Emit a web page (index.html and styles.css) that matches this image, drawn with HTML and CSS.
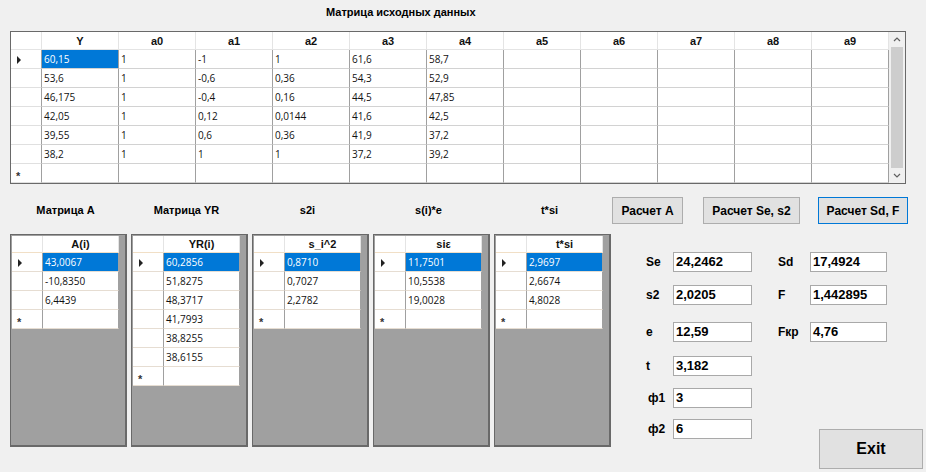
FILE: index.html
```html
<!DOCTYPE html>
<html lang="ru">
<head>
  <meta charset="UTF-8" />
  <title>Матрица исходных данных</title>
  <link rel="stylesheet" href="styles.css">
</head>
<body>

  <div class="title">Матрица исходных данных</div>

  <div class="datagrid">
    <table class="dg main">
      <colgroup>
        <col class="rhc"><col><col><col><col><col><col><col><col><col><col><col>
      </colgroup>
      <tr><th></th><th>Y</th><th>a0</th><th>a1</th><th>a2</th><th>a3</th><th>a4</th><th>a5</th><th>a6</th><th>a7</th><th>a8</th><th>a9</th></tr>
      <tr><td class="rh"><span class="cur"></span></td><td class="sel">60,15</td><td>1</td><td>-1</td><td>1</td><td>61,6</td><td>58,7</td><td></td><td></td><td></td><td></td><td></td></tr>
      <tr><td class="rh"></td><td>53,6</td><td>1</td><td>-0,6</td><td>0,36</td><td>54,3</td><td>52,9</td><td></td><td></td><td></td><td></td><td></td></tr>
      <tr><td class="rh"></td><td>46,175</td><td>1</td><td>-0,4</td><td>0,16</td><td>44,5</td><td>47,85</td><td></td><td></td><td></td><td></td><td></td></tr>
      <tr><td class="rh"></td><td>42,05</td><td>1</td><td>0,12</td><td>0,0144</td><td>41,6</td><td>42,5</td><td></td><td></td><td></td><td></td><td></td></tr>
      <tr><td class="rh"></td><td>39,55</td><td>1</td><td>0,6</td><td>0,36</td><td>41,9</td><td>37,2</td><td></td><td></td><td></td><td></td><td></td></tr>
      <tr><td class="rh"></td><td>38,2</td><td>1</td><td>1</td><td>1</td><td>37,2</td><td>39,2</td><td></td><td></td><td></td><td></td><td></td></tr>
      <tr><td class="rh new">*</td><td></td><td></td><td></td><td></td><td></td><td></td><td></td><td></td><td></td><td></td><td></td></tr>
    </table>
    <div class="vscroll">
      <svg class="arr" width="16" height="15" viewBox="0 0 16 15"><path d="M5 9 L8 6 L11 9" fill="none" stroke="#606060" stroke-width="1.2"/></svg>
      <div class="thumb"></div>
      <svg class="arr" width="16" height="15" viewBox="0 0 16 15"><path d="M5 6 L8 9 L11 6" fill="none" stroke="#606060" stroke-width="1.2"/></svg>
    </div>
  </div>

  <div class="lower">
    <div class="sets">
      <div class="set">
        <div class="cap">Матрица A</div>
        <div class="box">
          <table class="dg small">
            <colgroup><col class="rhc"><col class="vc"></colgroup>
            <tr><th></th><th>A(i)</th></tr>
            <tr><td class="rh"><span class="cur"></span></td><td class="sel">43,0067</td></tr>
            <tr><td class="rh"></td><td>-10,8350</td></tr>
            <tr><td class="rh"></td><td>6,4439</td></tr>
            <tr><td class="rh new">*</td><td></td></tr>
          </table>
        </div>
      </div>
      <div class="set">
        <div class="cap">Матрица YR</div>
        <div class="box">
          <table class="dg small">
            <colgroup><col class="rhc"><col class="vc"></colgroup>
            <tr><th></th><th>YR(i)</th></tr>
            <tr><td class="rh"><span class="cur"></span></td><td class="sel">60,2856</td></tr>
            <tr><td class="rh"></td><td>51,8275</td></tr>
            <tr><td class="rh"></td><td>48,3717</td></tr>
            <tr><td class="rh"></td><td>41,7993</td></tr>
            <tr><td class="rh"></td><td>38,8255</td></tr>
            <tr><td class="rh"></td><td>38,6155</td></tr>
            <tr><td class="rh new">*</td><td></td></tr>
          </table>
        </div>
      </div>
      <div class="set">
        <div class="cap">s2i</div>
        <div class="box">
          <table class="dg small">
            <colgroup><col class="rhc"><col class="vc"></colgroup>
            <tr><th></th><th>s_i^2</th></tr>
            <tr><td class="rh"><span class="cur"></span></td><td class="sel">0,8710</td></tr>
            <tr><td class="rh"></td><td>0,7027</td></tr>
            <tr><td class="rh"></td><td>2,2782</td></tr>
            <tr><td class="rh new">*</td><td></td></tr>
          </table>
        </div>
      </div>
      <div class="set">
        <div class="cap">s(i)*e</div>
        <div class="box">
          <table class="dg small">
            <colgroup><col class="rhc"><col class="vc"></colgroup>
            <tr><th></th><th>siε</th></tr>
            <tr><td class="rh"><span class="cur"></span></td><td class="sel">11,7501</td></tr>
            <tr><td class="rh"></td><td>10,5538</td></tr>
            <tr><td class="rh"></td><td>19,0028</td></tr>
            <tr><td class="rh new">*</td><td></td></tr>
          </table>
        </div>
      </div>
      <div class="set">
        <div class="cap">t*si</div>
        <div class="box">
          <table class="dg small">
            <colgroup><col class="rhc"><col class="vc"></colgroup>
            <tr><th></th><th>t*si</th></tr>
            <tr><td class="rh"><span class="cur"></span></td><td class="sel">2,9697</td></tr>
            <tr><td class="rh"></td><td>2,6674</td></tr>
            <tr><td class="rh"></td><td>4,8028</td></tr>
            <tr><td class="rh new">*</td><td></td></tr>
          </table>
        </div>
      </div>
    </div>

    <div class="side">
      <div class="btns">
        <button class="btn b1">Расчет A</button>
        <button class="btn b2">Расчет Se, s2</button>
        <button class="btn b3">Расчет Sd, F</button>
      </div>

      <div class="fields">
        <div class="fl c1">Se</div><div class="tb c2">24,2462</div>
        <div class="fl c3">Sd</div><div class="tb c4">17,4924</div>

        <div class="fl c1">s2</div><div class="tb c2">2,0205</div>
        <div class="fl c3">F</div><div class="tb c4">1,442895</div>

        <div class="fl c1">e</div><div class="tb c2">12,59</div>
        <div class="fl c3">Fкр</div><div class="tb c4">4,76</div>

        <div class="fl c1">t</div><div class="tb c2">3,182</div>

        <div class="fl c1 phi">ф1</div><div class="tb c2">3</div>

        <div class="fl c1 phi">ф2</div><div class="tb c2">6</div>
        <button class="btn exit">Exit</button>
      </div>
    </div>
  </div>

</body>
</html>
```

FILE: styles.css
```css
body {
  margin: 0;
  width: 926px;
  height: 472px;
  overflow: hidden;
  background: #f0f0f0;
  font-family: "Liberation Sans", Arial, sans-serif;
  color: #000;
}

.title {
  height: 31px;
  box-sizing: border-box;
  padding: 4px 0 0 326px;
  font-size: 11px;
  font-weight: bold;
  line-height: 16px;
}

/* Data grids */
.datagrid {
  display: flex;
  margin-left: 10px;
  width: 896px;
  height: 153px;
  box-sizing: border-box;
  border: 1px solid #696969;
  background: #fff;
}

.dg {
  border-collapse: separate;
  border-spacing: 0;
  table-layout: fixed;
  background: #fff;
  font-family: "Open Sans", sans-serif;
  font-size: 10px;
}

.dg.main {
  width: 878px;
}

.dg.main col {
  width: 77px;
}

.dg col.rhc {
  width: 31px;
}

.dg th,
.dg td {
  box-sizing: border-box;
  height: 19px;
  padding: 0 2px;
  border-right: 1px solid #a0a0a0;
  border-bottom: 1px solid #d2d2d2;
  white-space: nowrap;
  overflow: hidden;
  text-align: left;
  color: #111;
}

.dg th {
  height: 18px;
  font-family: "Liberation Sans", Arial, sans-serif;
  font-size: 11px;
  font-weight: bold;
  text-align: center;
  border-right-color: #e4e4e4;
  border-bottom-color: #e4e4e4;
}

.dg td.rh {
  padding-left: 6px;
  border-bottom-color: #e0e0e0;
}

.dg td.new {
  font-family: "Liberation Sans", Arial, sans-serif;
  font-size: 11px;
  font-weight: bold;
  padding-top: 5px;
  padding-left: 5px;
  color: #333;
}

.cur {
  display: inline-block;
  width: 0;
  height: 0;
  border-left: 4px solid #222;
  border-top: 4px solid transparent;
  border-bottom: 4px solid transparent;
  vertical-align: middle;
}

.dg td.sel {
  background: #0078d7;
  color: #fff;
}

.vscroll {
  width: 16px;
  display: flex;
  flex-direction: column;
  background: #f0f0f0;
}

.vscroll .arr {
  display: block;
  flex: none;
}

.vscroll .thumb {
  flex: 1;
  margin: 0 2px;
  background: #cdcdcd;
}

/* Lower part */
.lower {
  display: flex;
}

.sets {
  display: flex;
  gap: 4px;
  padding-left: 10px;
}

.set {
  width: 117px;
}

.cap {
  margin-top: 13px;
  height: 27px;
  line-height: 27px;
  padding-right: 6px;
  text-align: center;
  font-size: 11px;
  font-weight: bold;
}

.box {
  margin-top: 10px;
  height: 213px;
  box-sizing: border-box;
  border: 1px solid #696969;
  border-right-width: 2px;
  border-bottom-width: 2px;
  padding: 1px 0 0 1px;
  background: #a0a0a0;
}

.dg.small {
  width: 107px;
}

.dg.small col.vc {
  width: 76px;
}

.dg.small th {
  height: 17px;
  border-bottom-color: #f1dfc6;
}

.dg.small td {
  border-bottom-color: #e6ddd2;
}

/* Right side */
.side {
  margin-left: 1px;
}

.btns {
  display: flex;
  gap: 20px;
  margin-top: 13px;
}

.btn {
  height: 27px;
  padding: 0;
  border: 1px solid #adadad;
  background: #e1e1e1;
  font-family: "Liberation Sans", Arial, sans-serif;
  font-size: 12px;
  font-weight: bold;
  color: #000;
}

.b1 { width: 71px; }
.b2 { width: 97px; }
.b3 { width: 90px; margin-left: -2px; border-color: #0078d7; }

.fields {
  display: grid;
  grid-template-columns: 27px 79px 26px 32px 77px 40px;
  grid-template-rows: 33px 37px 34px 32px 31px auto;
  margin-top: 28px;
  padding-left: 34px;
  align-items: start;
}

.fl {
  font-size: 12px;
  font-weight: bold;
  line-height: 20px;
}

.phi {
  padding-left: 2px;
}

.tb {
  height: 20px;
  box-sizing: border-box;
  border: 1px solid #a9a9a9;
  background: #fff;
  padding-left: 2px;
  font-size: 13px;
  font-weight: bold;
  line-height: 18px;
}

.c1 { grid-column: 1; }
.c2 { grid-column: 2; }
.c3 { grid-column: 4; }
.c4 { grid-column: 5; }

.exit {
  grid-column: 4 / span 3;
  width: 104px;
  height: 40px;
  margin: 10px 0 0 41px;
  font-size: 16px;
}
```
